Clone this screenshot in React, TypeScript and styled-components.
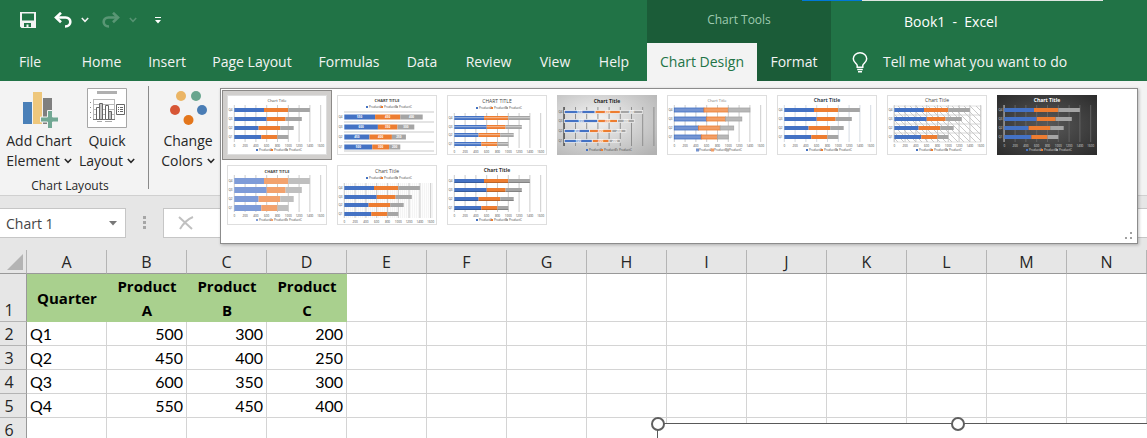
import React from "react";
import styled, { createGlobalStyle, css } from "styled-components";

const GlobalStyle = createGlobalStyle`
  *, *::before, *::after { box-sizing: border-box; }
  html, body, #root { height: 100%; }
  body { margin: 0; overflow: hidden; }
  button, input, select { font: inherit; color: inherit; margin: 0; }
`;

const ui = `"Open Sans", "Noto Sans", sans-serif`;

const Window = styled.div`
  height: 100%;
  display: flex;
  flex-direction: column;
  overflow: hidden;
  background: #e6e6e6;
  font-family: ${ui};
  font-size: 14px;
  line-height: 20px;
  color: #262626;
`;

/* ---------- title bar and tabs ---------- */

const Header = styled.header`
  position: relative;
  display: flex;
  background: #217346;
  color: #f3f3f3;
`;

const HeaderColumn = styled.div<{ $width?: number; $dark?: boolean }>`
  display: flex;
  flex-direction: column;
  ${(p) => (p.$width ? `flex: 0 0 ${p.$width}px;` : "flex: 1;")}
  ${(p) => p.$dark && "background: #1b5c38;"}
`;

const TitleRow = styled.div`
  height: 43px;
  display: flex;
  align-items: center;
`;

const QuickAccess = styled(TitleRow)`
  padding: 0 0 3px 20px;
`;

const IconButton = styled.button<{ $gap: number; $faded?: boolean }>`
  display: flex;
  padding: 0;
  border: 0;
  background: none;
  margin-right: ${(p) => p.$gap}px;
  opacity: ${(p) => (p.$faded ? 0.25 : 1)};
`;

const ContextLabel = styled(TitleRow)`
  justify-content: center;
  padding-bottom: 4px;
  font-size: 12px;
  color: #9fcbb0;
`;

const WindowTitle = styled(TitleRow)`
  padding-left: 73px;
  white-space: pre;
  color: #fff;
`;

const TabRow = styled.div`
  height: 38px;
  display: flex;
`;

const Tab = styled.button<{ $width: number; $active?: boolean }>`
  flex: 0 0 ${(p) => p.$width}px;
  padding: 0;
  border: 0;
  background: none;
  white-space: nowrap;
  ${(p) => p.$active && css`
    background: #f3f3f3;
    color: #217346;
  `}
`;

const TellMe = styled.button`
  display: flex;
  align-items: center;
  gap: 15px;
  padding: 0 0 0 21px;
  border: 0;
  background: none;
  white-space: nowrap;
`;

const ShareStrip = styled.div`
  position: absolute;
  top: 0;
  right: 44px;
  width: 301px;
  height: 1px;
  background: linear-gradient(90deg, #0078d7 60px, #dfe5e1 60px);
`;

/* ---------- ribbon ---------- */

const Ribbon = styled.section`
  position: relative;
  z-index: 2;
  display: flex;
  height: 115px;
  background: #f3f3f3;
  border-bottom: 1px solid #d0d0d0;
`;

const Group = styled.div<{ $width: number }>`
  width: ${(p) => p.$width}px;
  display: flex;
  flex-direction: column;
  align-items: center;
  padding: 7px 2px 0 0;
`;

const GroupTools = styled.div`
  display: flex;
`;

const GroupLabel = styled.div`
  margin-top: 5px;
  padding-right: 6px;
  font-size: 12px;
  white-space: nowrap;
`;

const Divider = styled.div`
  width: 1px;
  margin: 5px 0 6px;
  background: #8a8a8a;
`;

const Tool = styled.button<{ $width: number }>`
  width: ${(p) => p.$width}px;
  padding: 0;
  border: 0;
  background: none;
  display: flex;
  flex-direction: column;
  align-items: center;
  white-space: nowrap;

  > svg { margin-bottom: 3px; }
`;

const ToolLine = styled.span`
  display: flex;
  align-items: center;
  gap: 4px;
`;

const Gallery = styled.div`
  position: absolute;
  top: 7px;
  left: 220px;
  right: 9px;
  height: 156px;
  padding: 1px;
  background: #fff;
  border: 1px solid #8c8c8c;
  box-shadow: 1px 1px 3px rgba(0, 0, 0, 0.25);
  display: grid;
  grid-template-columns: repeat(auto-fill, 110px);
  grid-auto-rows: 70px;
  align-content: start;
`;

const StyleOption = styled.button<{ $selected?: boolean }>`
  display: flex;
  align-items: center;
  justify-content: center;
  padding: 0;
  border: 1px solid ${(p) => (p.$selected ? "#8c8a88" : "transparent")};
  background: ${(p) => (p.$selected ? "#d1cfcd" : "none")};
`;

const Grip = styled.svg`
  position: absolute;
  right: 4px;
  bottom: 3px;
`;

/* ---------- formula bar ---------- */

const FormulaBar = styled.div`
  display: flex;
  height: 54px;
  padding: 12px 0;
`;

const NameBox = styled.label`
  position: relative;
  width: 126px;
  border: 1px solid #c6c6c6;
  border-left: 0;
  background: #fff;

  select {
    width: 100%;
    height: 100%;
    padding: 1px 6px 0;
    border: 0;
    appearance: none;
    background: none;
    color: #444;
  }
  svg {
    position: absolute;
    right: 8px;
    top: 12px;
    pointer-events: none;
  }
`;

const Dots = styled.svg`
  margin: 8px 17px 0;
`;

const FormulaBox = styled.div`
  flex: 1;
  display: flex;
  align-items: center;
  padding-left: 14px;
  border: 1px solid #c6c6c6;
  border-right: 0;
  background: #fff;

  input {
    flex: 1;
    height: 100%;
    margin-left: 40px;
    border: 0;
    outline: 0;
    background: none;
  }
`;

/* ---------- worksheet ---------- */

const Sheet = styled.main`
  position: relative;
  flex: 1;
  min-height: 0;
  overflow: hidden;
  background: #fff;
`;

const Grid = styled.table`
  width: 100%;
  table-layout: fixed;
  border-collapse: separate;
  border-spacing: 0;
  color: #000;

  col.index { width: 27px; }
  col.data { width: 80px; }
`;

const ColHead = styled.th`
  height: 24px;
  padding: 0;
  background: #e6e6e6;
  border-right: 1px solid #b4b4b4;
  border-bottom: 1px solid #999;
  font-size: 16px;
  font-weight: 400;
  color: #262626;

  svg { display: block; margin: 1px 0 0 7px; }
`;

const RowHead = styled.th`
  height: 24px;
  padding: 0 8px 3px 0;
  background: #e6e6e6;
  border-right: 1px solid #999;
  border-bottom: 1px solid #b4b4b4;
  font-size: 16px;
  line-height: 16px;
  font-weight: 400;
  text-align: center;
  vertical-align: bottom;
  color: #262626;
`;

const Cell = styled.td<{ $align?: "left" | "right" }>`
  padding: 0 3px;
  border-right: 1px solid #d4d4d4;
  border-bottom: 1px solid #d4d4d4;
  font-family: Lato, "Open Sans", sans-serif;
  font-size: 16px;
  line-height: 20px;
  text-align: ${(p) => p.$align ?? "left"};
`;

const HeadCell = styled.td`
  height: 48px;
  padding: 0 8px;
  background: #a9d08e;
  font-family: "Open Sans", sans-serif;
  font-size: 15px;
  font-weight: 700;
  line-height: 24px;
  text-align: center;
`;

const ChartObject = styled.div`
  position: absolute;
  left: 657px;
  top: 173px;
  width: 602px;
  height: 300px;
  background: #fff;
  border: 1px solid #595959;
`;

const Handle = styled.i<{ $at: string }>`
  position: absolute;
  top: -7px;
  left: ${(p) => p.$at};
  width: 14px;
  height: 14px;
  margin-left: -7px;
  border: 2px solid #5f5f5f;
  border-radius: 50%;
  background: #fff;
`;

/* ---------- icons ---------- */

const Chevron = ({ color = "currentColor" }: { color?: string }) => (
  <svg width="8" height="6" viewBox="0 0 8 6" fill="none" stroke={color} strokeWidth="1.5">
    <path d="M.8 1 4 4.3 7.2 1" />
  </svg>
);

const SaveIcon = () => (
  <svg width="16" height="16" viewBox="0 0 16 16">
    <path fill="#f3f3f3" fillRule="evenodd" d="M0 0h16v16H1.5L0 14.5zM2 1.5v7h12v-7zM4 11v4h2.500v-2.500h2V15H11v-4z" />
  </svg>
);

const UndoIcon = ({ flip = false }: { flip?: boolean }) => (
  <svg width="18" height="16" viewBox="0 0 18 16" fill="none" stroke="#fff" strokeWidth="2.600">
    <g transform={flip ? "translate(18 0) scale(-1 1)" : undefined}>
      <path d="M2 5.500h9.500c6.500 0 6.500 9-.5 9" />
      <path d="M7 .8 2 5.500l5 4.700" />
    </g>
  </svg>
);

const CustomizeIcon = () => (
  <svg width="6" height="7" viewBox="0 0 6 7" fill="#fff">
    <path d="M0 0h6v1H0zM0 3h6L3 6.500z" />
  </svg>
);

const BulbIcon = () => (
  <svg width="16" height="21" viewBox="0 0 16 21" fill="none" stroke="#fff" strokeWidth="1.500">
    <path d="M5.200 15.200v-1.700C5.200 11.500 1.300 10.500 1.300 6.800a6.700 6 0 0 1 13.400 0c0 3.700-3.900 4.700-3.900 6.700v1.700zM5.200 17.400h5.600M6 19.800h4" />
  </svg>
);

const AddElementIcon = () => (
  <svg width="40" height="40" viewBox="0 0 40 40">
    <path fill="#4a80b8" d="M4 14h9v22H4z" />
    <path fill="#eec77c" d="M14 4h9v32h-9z" />
    <path fill="#7f7f7f" d="M24 10h9v26h-9z" />
    <path fill="#72a894" stroke="#f3f3f3" strokeWidth="1" d="M28.500 22.500h5v6.500H39.500v5h-6v6.500h-5v-6.500H21.500v-5h7z" />
  </svg>
);

const QuickLayoutIcon = () => (
  <svg width="40" height="40" viewBox="0 0 40 40" fill="none">
    <path fill="#fff" stroke="#a6a6a6" d="M.5.5h39v39H.5z" />
    <path fill="#b0b0b0" d="M10 3h20v3H10z" />
    <path stroke="#b8b8b8" d="M6.500 11v21M6 11.500h22M6 16.500h22M6 21.500h22M6 26.500h22M27.500 11v21" />
    <path stroke="#8c8c8c" strokeDasharray="1 4" d="M3.500 14v18" />
    <path stroke="#777" d="M6 31.500h22" />
    <path fill="#fff" stroke="#666" d="M9.500 19.500h3v12h-3zM18.500 17.500h3v14h-3z" />
    <path fill="#c4c4c4" stroke="#666" d="M12.500 15.500h3v16h-3zM21.500 23.500h3v8h-3z" />
    <path stroke="#aaa" d="M10 33.500h5M18 33.500h7" />
    <path fill="#fff" stroke="#666" d="M29.500 16.500h8v10h-8z" />
    <path stroke="#666" d="M31 19.500h1M33 19.500h3M31 21.500h1M33 21.500h3M31 23.500h1M33 23.500h3" />
  </svg>
);

const ColorsIcon = () => (
  <svg width="40" height="40" viewBox="0 0 40 40">
    <circle cx="13" cy="8" r="5" fill="#ebb565" />
    <circle cx="28" cy="8" r="5" fill="#68a58e" />
    <circle cx="7" cy="22" r="5" fill="#d75636" />
    <circle cx="34" cy="22" r="5" fill="#4a7db5" />
    <circle cx="20.500" cy="32" r="5" fill="#e3761c" />
  </svg>
);

/* ---------- chart style previews ---------- */

type Preview = {
  title: string;
  titleY?: number;
  titleSize?: number;
  titleColor?: string;
  bold?: boolean;
  rows: number[];
  bar: number;
  colors?: string[];
  legendY?: number;
  axisY?: number;
  plot?: [number, number];
  scale?: number;
  line?: string;
  bg?: "gray" | "dark";
  variant?: "bands" | "stripe" | "outline" | "hatch" | "fine" | "bevel" | "labels";
};

const SERIES = [
  [550, 450, 400],
  [600, 350, 300],
  [450, 400, 250],
  [500, 300, 200],
];
const COLORS = ["#4472c4", "#ed7d31", "#a5a5a5"];
const LOW = [15, 24, 33, 42];
const HIGH = [23, 32, 40, 49];

const PREVIEWS: Preview[] = [
  { title: "Chart Title", rows: LOW, bar: 4 },
  { title: "CHART TITLE", bold: true, titleColor: "#444", rows: [22, 32, 42, 52], bar: 5, legendY: 12, axisY: 0, scale: 56, variant: "bands" },
  { title: "CHART TITLE", titleSize: 5, titleY: 6, rows: HIGH, bar: 4, legendY: 13, axisY: 57, plot: [18, 53], variant: "stripe" },
  { title: "Chart Title", bold: true, titleColor: "#222", titleY: 6, titleSize: 5, rows: [17, 26, 36, 46], bar: 3, axisY: 0, scale: 56, plot: [12, 51], line: "#888", bg: "gray", variant: "labels" },
  { title: "Chart Title", rows: LOW, bar: 4, titleColor: "#777", colors: ["#7494d2", "#f19e66", "#b7b7b7"], variant: "outline" },
  { title: "Chart Title", bold: true, titleSize: 5, titleColor: "#333f50", rows: LOW, bar: 4, line: "#d0d6df" },
  { title: "Chart Title", rows: LOW, bar: 4, titleSize: 5, variant: "hatch" },
  { title: "Chart Title", bold: true, titleSize: 5, titleColor: "#fff", rows: LOW, bar: 4, line: "#666", bg: "dark" },
  { title: "CHART TITLE", bold: true, titleY: 6, rows: [16, 25, 34, 43], bar: 6, colors: ["#7d9bd8", "#f2a26e", "#bfbfbf"] },
  { title: "Chart Title", titleY: 6, titleSize: 5, rows: HIGH, bar: 4, legendY: 13, axisY: 57, plot: [18, 53], variant: "fine" },
  { title: "Chart Title", bold: true, titleSize: 5, titleColor: "#333", rows: [16, 25, 34, 43], bar: 4, variant: "bevel" },
];

const ChartPreview = ({ p, id }: { p: Preview; id: string }) => {
  const colors = p.colors ?? COLORS;
  const unit = (p.scale ?? 54) / 1000;
  const [top, bottom] = p.plot ?? [10, 47];
  const ink = p.bg === "dark" ? "#ddd" : "#444";
  const step = unit * 200;
  const legendY = p.legendY ?? 55;
  const axisY = p.axisY ?? 51;
  const key = p.variant === "outline" ? 3 : 2;
  const xs = Array.from({ length: 9 }, (_, i) => 7.3 + i * step);
  return (
    <svg width="100" height="60" viewBox="0 0 100 60" fontFamily="Open Sans, sans-serif">
      <defs>
        <radialGradient id={`${id}-gray`} cx=".4" cy=".4" r=".8">
          <stop offset="0" stopColor="#f4f4f4" />
          <stop offset="1" stopColor="#b2b2b2" />
        </radialGradient>
        <radialGradient id={`${id}-dark`} cx=".5" cy=".5" r=".7">
          <stop offset="0" stopColor="#595959" />
          <stop offset="1" stopColor="#2c2c2c" />
        </radialGradient>
        <pattern id={`${id}-hatch`} width="6" height="6" patternUnits="userSpaceOnUse">
          <path d="M0 0 6 6" stroke="#bbb" strokeWidth=".8" />
        </pattern>
      </defs>
      {p.bg ? (
        <rect width="100" height="60" fill={`url(#${id}-${p.bg})`} />
      ) : (
        <rect x=".5" y=".5" width="99" height="59" fill="#fff" stroke="#dedede" />
      )}
      {p.variant === "hatch" && <rect x="7" y="11" width="87" height="36" fill={`url(#${id}-hatch)`} stroke="#ccc" strokeWidth=".6" />}
      {p.variant === "hatch" && [20, 29, 38].map((y) => <path key={y} d={`M7 ${y}h87`} stroke="#ccc" strokeWidth=".8" />)}
      {p.variant === "bands" && [17, 27, 37, 47, 56].map((y) => <rect key={y} x="7" y={y - 1} width="90" height="2" fill="#e4e4e4" />)}
      {p.variant === "fine" && Array.from({ length: 45 }, (_, i) => (
        <path key={i} d={`M${7.3 + i * 2} ${top}V${bottom}`} stroke="#e8e8e8" strokeWidth=".6" />
      ))}
      {p.variant !== "bands" && xs.map((x) => (
        <path key={x} d={`M${x} ${top}V${bottom}`} stroke={p.line ?? "#c6c6c6"} strokeWidth=".9" />
      ))}
      {p.variant === "labels" && <path d={`M7 ${top}V${bottom}`} stroke="#555" strokeWidth="1.500" />}
      {p.bg === "dark" && <path d={`M7 ${top}V${bottom}`} stroke="#bbb" />}
      <text x="50" y={(p.titleY ?? 5) + 1.5} textAnchor="middle" fontSize={p.titleSize ?? 4} fontWeight={p.bold ? 700 : 400} fill={p.titleColor ?? "#444"}>
        {p.title}
      </text>
      {p.rows.map((y, r) => {
        let x = 7.3;
        return (
          <g key={y}>
            <text x="1.500" y={y + 1} fontSize="3" fill={ink}>Q{4 - r}</text>
            {SERIES[r].map((v, s) => {
              const w = v * unit;
              const x0 = x;
              x += w;
              return (
                <g key={s}>
                  <rect
                    x={x0} y={y - p.bar / 2} width={w} height={p.bar} fill={colors[s]}
                    stroke={p.variant === "outline" ? COLORS[s] : p.variant === "labels" ? "#eee" : "none"} strokeWidth=".8"
                  />
                  {p.variant === "stripe" && <rect x={x0} y={y - 1} width={w} height="1.200" fill="#fff" opacity=".4" />}
                  {p.variant === "bevel" && <rect x={x0} y={y + 1} width={w} height="1" fill="#000" opacity=".2" />}
                  {(p.variant === "bands" || p.variant === "labels") && (
                    <text x={x0 + w / 2} y={y + 1} textAnchor="middle" fontSize="3" fontWeight="700" fill="#fff">{v}</text>
                  )}
                </g>
              );
            })}
          </g>
        );
      })}
      {axisY > 0 && xs.map((x, i) => (
        <text key={x} x={x} y={axisY + 0.5} textAnchor="middle" fontSize="3" fill={ink}>{i * 200}</text>
      ))}
      {["A", "B", "C"].map((name, i) => (
        <g key={name}>
          <rect x={29 + i * 15} y={legendY - key / 2} width={key} height={key} fill={colors[i]} />
          <text x={32 + i * 15} y={legendY + 1} fontSize="3" fill={ink}>Product{name}</text>
        </g>
      ))}
    </svg>
  );
};

/* ---------- page ---------- */

const TABS: [string, number][] = [
  ["File", 60], ["Home", 83], ["Insert", 48], ["Page Layout", 122], ["Formulas", 72],
  ["Data", 74], ["Review", 59], ["View", 74], ["Help", 44],
];
const COLUMNS = "ABCDEFGHIJKLMN".split("");
const HEADINGS = ["Quarter", "Product A", "Product B", "Product C"];
const ROWS: (string | number)[][] = [
  ["Q1", 500, 300, 200],
  ["Q2", 450, 400, 250],
  ["Q3", 600, 350, 300],
  ["Q4", 550, 450, 400],
  [],
];

export default function App() {
  return (
    <Window>
      <GlobalStyle />
      <Header>
        <HeaderColumn $width={647}>
          <QuickAccess>
            <IconButton $gap={18} aria-label="Save"><SaveIcon /></IconButton>
            <IconButton $gap={9} aria-label="Undo"><UndoIcon /></IconButton>
            <IconButton $gap={13} aria-label="Undo history"><Chevron /></IconButton>
            <IconButton $gap={9} $faded aria-label="Redo"><UndoIcon flip /></IconButton>
            <IconButton $gap={18} $faded aria-label="Redo history"><Chevron /></IconButton>
            <IconButton $gap={0} aria-label="Customize toolbar"><CustomizeIcon /></IconButton>
          </QuickAccess>
          <TabRow>
            {TABS.map(([name, width]) => <Tab key={name} $width={width}>{name}</Tab>)}
          </TabRow>
        </HeaderColumn>
        <HeaderColumn $width={184} $dark>
          <ContextLabel>Chart Tools</ContextLabel>
          <TabRow>
            <Tab $width={110} $active>Chart Design</Tab>
            <Tab $width={74}>Format</Tab>
          </TabRow>
        </HeaderColumn>
        <HeaderColumn>
          <WindowTitle>{"Book1  -  Excel"}</WindowTitle>
          <TabRow>
            <TellMe><BulbIcon />Tell me what you want to do</TellMe>
          </TabRow>
        </HeaderColumn>
        <ShareStrip />
      </Header>

      <Ribbon>
        <Group $width={148}>
          <GroupTools>
            <Tool $width={68}>
              <AddElementIcon />
              <ToolLine>Add Chart</ToolLine>
              <ToolLine>Element <Chevron /></ToolLine>
            </Tool>
            <Tool $width={68}>
              <QuickLayoutIcon />
              <ToolLine>Quick</ToolLine>
              <ToolLine>Layout <Chevron /></ToolLine>
            </Tool>
          </GroupTools>
          <GroupLabel>Chart Layouts</GroupLabel>
        </Group>
        <Divider />
        <Group $width={80}>
          <Tool $width={68}>
            <ColorsIcon />
            <ToolLine>Change</ToolLine>
            <ToolLine>Colors <Chevron /></ToolLine>
          </Tool>
        </Group>
        <Gallery>
          {PREVIEWS.map((p, i) => (
            <StyleOption key={i} $selected={i === 0} aria-label={`Style ${i + 1}`}>
              <ChartPreview p={p} id={`style${i}`} />
            </StyleOption>
          ))}
          <Grip width="8" height="8" viewBox="0 0 8 8" fill="#a0a0a0">
            <path d="M5 0h2v2H5zM5 5h2v2H5zM0 5h2v2H0z" />
          </Grip>
        </Gallery>
      </Ribbon>

      <FormulaBar>
        <NameBox>
          <select aria-label="Name box"><option>Chart 1</option></select>
          <svg width="8" height="5" viewBox="0 0 8 5"><path fill="#777" d="M0 0h8L4 4.500z" /></svg>
        </NameBox>
        <Dots width="3" height="14" viewBox="0 0 3 14" fill="#a6a6a6">
          <path d="M0 0h3v3H0zM0 5h3v3H0zM0 10h3v3H0z" />
        </Dots>
        <FormulaBox>
          <svg width="16" height="14" viewBox="0 0 16 14" fill="none" stroke="#c0c0c0" strokeWidth="2">
            <path d="M1 1 14 13M15 1C10 3 5 8 2 13" />
          </svg>
          <input aria-label="Formula" />
        </FormulaBox>
      </FormulaBar>

      <Sheet>
        <Grid>
          <colgroup>
            <col className="index" />
            {COLUMNS.map((c, i) => <col key={c} className={i < 4 ? "data" : undefined} />)}
          </colgroup>
          <thead>
            <tr>
              <ColHead aria-label="Select all">
                <svg width="16" height="16" viewBox="0 0 16 16"><path fill="#b4b4b4" d="M16 0v16H0z" /></svg>
              </ColHead>
              {COLUMNS.map((c) => <ColHead key={c} scope="col">{c}</ColHead>)}
            </tr>
          </thead>
          <tbody>
            <tr>
              <RowHead scope="row">1</RowHead>
              {HEADINGS.map((h) => <HeadCell key={h}>{h}</HeadCell>)}
              {COLUMNS.slice(4).map((c) => <Cell key={c} />)}
            </tr>
            {ROWS.map((row, r) => (
              <tr key={r}>
                <RowHead scope="row">{r + 2}</RowHead>
                {COLUMNS.map((c, i) => (
                  <Cell key={c} $align={i > 0 ? "right" : "left"}>{row[i]}</Cell>
                ))}
              </tr>
            ))}
          </tbody>
        </Grid>
        <ChartObject>
          <Handle $at="0%" />
          <Handle $at="50%" />
        </ChartObject>
      </Sheet>
    </Window>
  );
}
